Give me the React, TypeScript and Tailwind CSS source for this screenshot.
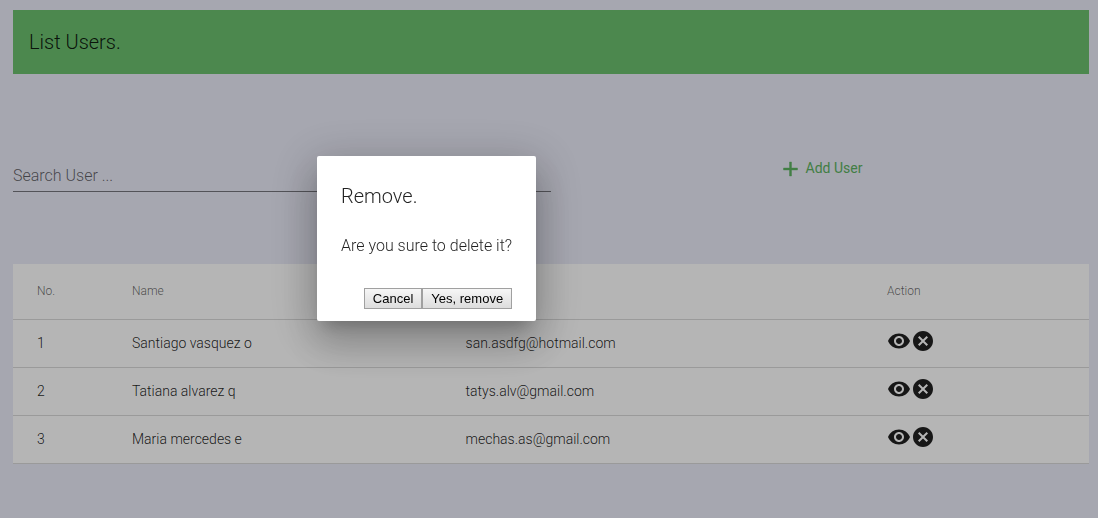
import React from "react";

type User = { id: number; name: string; email: string };

const users: User[] = [
  { id: 1, name: "Santiago vasquez o", email: "san.asdfg@hotmail.com" },
  { id: 2, name: "Tatiana alvarez q", email: "tatys.alv@gmail.com" },
  { id: 3, name: "Maria mercedes e", email: "mechas.as@gmail.com" },
];

function PlusIcon() {
  return (
    <svg viewBox="0 0 24 24" className="size-6" fill="currentColor" aria-hidden="true">
      <path d="M19.5 14h-6v6h-2v-6h-6v-2h6V6h2v6h6z" stroke="currentColor" strokeWidth="0.4" />
    </svg>
  );
}

function EyeIcon() {
  return (
    <svg viewBox="0 0 24 24" className="size-6" fill="currentColor" aria-hidden="true">
      <path d="M12 4.5C7 4.5 2.73 7.61 1 12c1.73 4.39 6 7.5 11 7.5s9.27-3.11 11-7.5c-1.73-4.39-6-7.5-11-7.5zM12 17c-2.76 0-5-2.24-5-5s2.24-5 5-5 5 2.24 5 5-2.24 5-5 5zm0-8c-1.66 0-3 1.34-3 3s1.34 3 3 3 3-1.34 3-3-1.34-3-3-3z" />
    </svg>
  );
}

function CancelIcon() {
  return (
    <svg viewBox="0 0 24 24" className="size-6" fill="currentColor" aria-hidden="true">
      <path d="M12 2C6.47 2 2 6.47 2 12s4.47 10 10 10 10-4.47 10-10S17.53 2 12 2zm5 13.59L15.59 17 12 13.41 8.41 17 7 15.59 10.59 12 7 8.41 8.41 7 12 10.59 15.59 7 17 8.41 13.41 12 17 15.59z" />
    </svg>
  );
}

function UsersTable() {
  return (
    <table className="mt-[72px] w-full table-fixed border-collapse bg-white text-left text-sm text-black/87">
      <colgroup>
        <col className="w-[119px]" />
        <col className="w-[31%]" />
        <col />
        <col className="w-[202px]" />
      </colgroup>
      <thead>
        <tr className="h-[55px] border-b border-black/15 text-xs text-black/60">
          <th scope="col" className="pl-6 font-light">No.</th>
          <th scope="col" className="font-light">Name</th>
          <th scope="col" aria-label="Email" />
          <th scope="col" className="font-light">Action</th>
        </tr>
      </thead>
      <tbody>
        {users.map((user) => (
          <tr key={user.id} className="h-12 border-b border-black/15">
            <td className="pl-6">{user.id}</td>
            <td>{user.name}</td>
            <td>{user.email}</td>
            <td>
              <div className="flex pb-1">
                <button type="button" aria-label={`View ${user.name}`}>
                  <EyeIcon />
                </button>
                <button type="button" aria-label={`Remove ${user.name}`}>
                  <CancelIcon />
                </button>
              </div>
            </td>
          </tr>
        ))}
      </tbody>
    </table>
  );
}

function RemoveDialog() {
  const button =
    "h-[21px] border border-[#a0a0a0] bg-linear-to-b from-[#f6f6f6] to-[#dddddd] px-2 font-['Liberation_Sans',Arial,sans-serif] text-[13px] leading-4 font-normal text-black";
  return (
    <div
      role="dialog"
      aria-modal="true"
      aria-labelledby="remove-title"
      className="fixed top-[156px] left-[317px] rounded-xs bg-white px-6 pt-6 pb-3 text-black/87 shadow-[0_11px_15px_-7px_rgba(0,0,0,0.2),0_24px_38px_3px_rgba(0,0,0,0.14),0_9px_46px_8px_rgba(0,0,0,0.18)]"
    >
      <h2 id="remove-title" className="text-xl leading-8">Remove.</h2>
      <p className="mt-5 text-base leading-7">Are you sure to delete it?</p>
      <div className="mt-7 flex justify-end">
        <button type="button" className={button}>Cancel</button>
        <button type="button" className={button}>Yes, remove</button>
      </div>
    </div>
  );
}

export default function App() {
  return (
    <div className="min-h-screen bg-[#eaebf8] font-[Roboto,sans-serif] font-light">
      <main className="pt-[10px] pr-[9px] pl-[13px]">
        <header className="flex h-16 items-center bg-[#6bc06f] px-4">
          <h1 className="text-xl text-black/87">List Users.</h1>
        </header>
        <div className="mt-[82px] flex items-start">
          <div className="w-1/2 pt-1">
            <input
              type="text"
              aria-label="Search user"
              placeholder="Search User ..."
              className="block h-8 w-full border-b border-black/50 bg-transparent text-base outline-none placeholder:text-black/60"
            />
          </div>
          <div className="flex w-1/2 justify-center">
            <button type="button" className="flex items-center gap-1 text-sm font-normal text-[#5cb261]">
              <PlusIcon />
              Add User
            </button>
          </div>
        </div>
        <UsersTable />
      </main>
      <div className="fixed inset-0 bg-black/29" />
      <RemoveDialog />
    </div>
  );
}
